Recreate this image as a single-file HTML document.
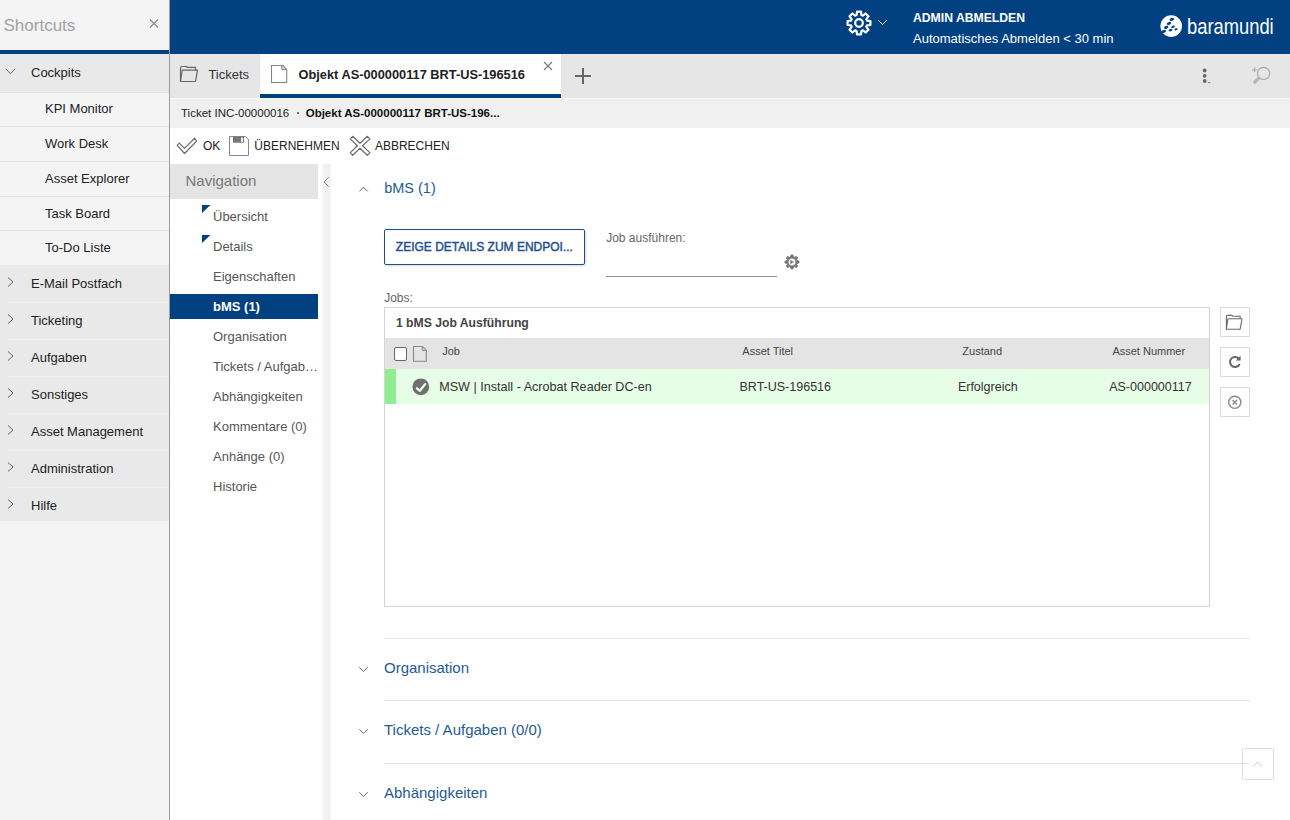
<!DOCTYPE html>
<html><head><meta charset="utf-8"><title>baramundi</title>
<style>
*{box-sizing:border-box;margin:0;padding:0}
html,body{width:1290px;height:820px;overflow:hidden;background:#fff;font-family:"Liberation Sans", sans-serif;position:relative}
svg{display:block}
</style></head><body>
<div style="position:absolute;left:0px;top:0px;width:169px;height:820px;background:#f4f4f4"></div>
<div style="position:absolute;left:169px;top:0px;width:1px;height:820px;background:#9c9c9c"></div>
<div style="position:absolute;left:3.5px;top:17px;font-size:17px;line-height:17px;font-weight:400;color:#a3a3a3;white-space:nowrap;">Shortcuts</div>
<svg style="position:absolute;left:149.4px;top:19px" width="10" height="9" viewBox="0 0 10 9"><path d="M1 0.5 L9 8.5 M9 0.5 L1 8.5" stroke="#8a8a8a" stroke-width="1.2"/></svg>
<div style="position:absolute;left:0px;top:50px;width:169px;height:4px;background:#014182"></div>
<div style="position:absolute;left:0px;top:54px;width:169px;height:38px;background:#e9e9e9"></div>
<svg style="position:absolute;left:5px;top:68px" width="12" height="8" viewBox="0 0 12 8"><path d="M0.8 0.8 L5.5 5.8 L10.2 0.8" fill="none" stroke="#777" stroke-width="1"/></svg>
<div style="position:absolute;left:31px;top:66px;font-size:13px;line-height:13px;font-weight:400;color:#222;white-space:nowrap;">Cockpits</div>
<div style="position:absolute;left:0px;top:92px;width:169px;height:1px;background:#e2e2e2"></div>
<div style="position:absolute;left:45px;top:102px;font-size:13px;line-height:13px;font-weight:400;color:#222;white-space:nowrap;">KPI Monitor</div>
<div style="position:absolute;left:0px;top:126px;width:169px;height:1px;background:#e2e2e2"></div>
<div style="position:absolute;left:45px;top:137px;font-size:13px;line-height:13px;font-weight:400;color:#222;white-space:nowrap;">Work Desk</div>
<div style="position:absolute;left:0px;top:161px;width:169px;height:1px;background:#e2e2e2"></div>
<div style="position:absolute;left:45px;top:172px;font-size:13px;line-height:13px;font-weight:400;color:#222;white-space:nowrap;">Asset Explorer</div>
<div style="position:absolute;left:0px;top:196px;width:169px;height:1px;background:#e2e2e2"></div>
<div style="position:absolute;left:45px;top:207px;font-size:13px;line-height:13px;font-weight:400;color:#222;white-space:nowrap;">Task Board</div>
<div style="position:absolute;left:0px;top:230px;width:169px;height:1px;background:#e2e2e2"></div>
<div style="position:absolute;left:45px;top:241px;font-size:13px;line-height:13px;font-weight:400;color:#222;white-space:nowrap;">To-Do Liste</div>
<div style="position:absolute;left:0px;top:265.1px;width:169px;height:256.4px;background:#e9e9e9"></div>
<div style="position:absolute;left:8px;top:302px;width:161px;height:1px;background:#eeeeee"></div>
<svg style="position:absolute;left:6px;top:275.9px" width="9" height="12" viewBox="0 0 9 12"><path d="M2 1.5 L7 6 L2 10.5" fill="none" stroke="#555" stroke-width="0.9"/></svg>
<div style="position:absolute;left:31px;top:277px;font-size:13px;line-height:13px;font-weight:400;color:#222;white-space:nowrap;">E-Mail Postfach</div>
<div style="position:absolute;left:8px;top:339px;width:161px;height:1px;background:#eeeeee"></div>
<svg style="position:absolute;left:6px;top:312.9px" width="9" height="12" viewBox="0 0 9 12"><path d="M2 1.5 L7 6 L2 10.5" fill="none" stroke="#555" stroke-width="0.9"/></svg>
<div style="position:absolute;left:31px;top:314px;font-size:13px;line-height:13px;font-weight:400;color:#222;white-space:nowrap;">Ticketing</div>
<div style="position:absolute;left:8px;top:376px;width:161px;height:1px;background:#eeeeee"></div>
<svg style="position:absolute;left:6px;top:349.9px" width="9" height="12" viewBox="0 0 9 12"><path d="M2 1.5 L7 6 L2 10.5" fill="none" stroke="#555" stroke-width="0.9"/></svg>
<div style="position:absolute;left:31px;top:351px;font-size:13px;line-height:13px;font-weight:400;color:#222;white-space:nowrap;">Aufgaben</div>
<div style="position:absolute;left:8px;top:413px;width:161px;height:1px;background:#eeeeee"></div>
<svg style="position:absolute;left:6px;top:386.9px" width="9" height="12" viewBox="0 0 9 12"><path d="M2 1.5 L7 6 L2 10.5" fill="none" stroke="#555" stroke-width="0.9"/></svg>
<div style="position:absolute;left:31px;top:388px;font-size:13px;line-height:13px;font-weight:400;color:#222;white-space:nowrap;">Sonstiges</div>
<div style="position:absolute;left:8px;top:450px;width:161px;height:1px;background:#eeeeee"></div>
<svg style="position:absolute;left:6px;top:423.9px" width="9" height="12" viewBox="0 0 9 12"><path d="M2 1.5 L7 6 L2 10.5" fill="none" stroke="#555" stroke-width="0.9"/></svg>
<div style="position:absolute;left:31px;top:425px;font-size:13px;line-height:13px;font-weight:400;color:#222;white-space:nowrap;">Asset Management</div>
<div style="position:absolute;left:8px;top:487px;width:161px;height:1px;background:#eeeeee"></div>
<svg style="position:absolute;left:6px;top:460.9px" width="9" height="12" viewBox="0 0 9 12"><path d="M2 1.5 L7 6 L2 10.5" fill="none" stroke="#555" stroke-width="0.9"/></svg>
<div style="position:absolute;left:31px;top:462px;font-size:13px;line-height:13px;font-weight:400;color:#222;white-space:nowrap;">Administration</div>
<svg style="position:absolute;left:6px;top:497.9px" width="9" height="12" viewBox="0 0 9 12"><path d="M2 1.5 L7 6 L2 10.5" fill="none" stroke="#555" stroke-width="0.9"/></svg>
<div style="position:absolute;left:31px;top:499px;font-size:13px;line-height:13px;font-weight:400;color:#222;white-space:nowrap;">Hilfe</div>
<div style="position:absolute;left:170px;top:0px;width:1120px;height:54px;background:#014182"></div>
<svg style="position:absolute;left:845.4px;top:9.3px" width="28" height="28" viewBox="-14 -14 28 28">
<path fill="none" stroke="#fff" stroke-width="2.2" stroke-linejoin="round" d="M-2.43,-7.94 L-2.01,-11.42 L2.01,-11.42 L2.43,-7.94 L3.90,-7.33 L6.65,-9.50 L9.50,-6.65 L7.33,-3.90 L7.94,-2.43 L11.42,-2.01 L11.42,2.01 L7.94,2.43 L7.33,3.90 L9.50,6.65 L6.65,9.50 L3.90,7.33 L2.43,7.94 L2.01,11.42 L-2.01,11.42 L-2.43,7.94 L-3.90,7.33 L-6.65,9.50 L-9.50,6.65 L-7.33,3.90 L-7.94,2.43 L-11.42,2.01 L-11.42,-2.01 L-7.94,-2.43 L-7.33,-3.90 L-9.50,-6.65 L-6.65,-9.50 L-3.90,-7.33 Z"/>
<circle cx="0" cy="0" r="3.8" fill="none" stroke="#fff" stroke-width="2.2"/></svg>
<svg style="position:absolute;left:877px;top:19px" width="11" height="7" viewBox="0 0 11 7"><path d="M1 1 L5.5 5.5 L10 1" fill="none" stroke="#dfe6ef" stroke-width="1"/></svg>
<div style="position:absolute;left:913px;top:12px;font-size:12.2px;line-height:12.2px;font-weight:700;color:#fff;white-space:nowrap;">ADMIN ABMELDEN</div>
<div style="position:absolute;left:913px;top:32px;font-size:13px;line-height:13px;font-weight:400;color:#fff;white-space:nowrap;">Automatisches Abmelden &lt; 30 min</div>
<svg style="position:absolute;left:1160px;top:14px" width="23" height="24" viewBox="0 0 23 24">
<circle cx="11.2" cy="12.1" r="10.8" fill="#fff"/>
<g fill="#014182">
<ellipse cx="11.8" cy="5.4" rx="2.3" ry="1.4" transform="rotate(-22 11.8 5.4)"/>
<ellipse cx="8.9" cy="9.5" rx="2.3" ry="1.4" transform="rotate(-22 8.9 9.5)"/>
<ellipse cx="6.2" cy="13.4" rx="2.3" ry="1.4" transform="rotate(-22 6.2 13.4)"/>
<ellipse cx="13" cy="12.8" rx="1.9" ry="1.1" transform="rotate(-15 13 12.8)"/>
<ellipse cx="3.8" cy="17.4" rx="2.3" ry="1.4" transform="rotate(-22 3.8 17.4)"/>
<ellipse cx="10.5" cy="16.1" rx="2.0" ry="1.2" transform="rotate(-15 10.5 16.1)"/>
<ellipse cx="16.1" cy="15.3" rx="1.7" ry="1.0" transform="rotate(-15 16.1 15.3)"/>
</g></svg>
<div style="position:absolute;left:1187px;top:16px;font-size:22px;line-height:22px;font-weight:400;color:#fff;white-space:nowrap;transform:scaleX(0.834);transform-origin:0 0">baramundi</div>
<div style="position:absolute;left:170px;top:54px;width:1120px;height:44px;background:#e6e6e6"></div>
<div style="position:absolute;left:260px;top:54px;width:301px;height:44px;background:#fff"></div>
<div style="position:absolute;left:260px;top:94px;width:301px;height:3.8px;background:#014182"></div>
<svg style="position:absolute;left:179px;top:65px" width="20" height="18" viewBox="0 0 20 18">
<path d="M1.5 16.5 L1.5 2.8 Q1.5 1.5 2.8 1.5 L7.4 1.5 L8.3 2.4 L16.5 2.4 L16.5 5.2" fill="none" stroke="#666" stroke-width="1.2"/>
<path d="M1.5 16.5 L3.2 5.2 L18.5 5.2 L16.5 16.5 Z" fill="none" stroke="#666" stroke-width="1.2" stroke-linejoin="round"/></svg>
<div style="position:absolute;left:208.4px;top:68px;font-size:13px;line-height:13px;font-weight:400;color:#333;white-space:nowrap;">Tickets</div>
<svg style="position:absolute;left:270px;top:64px" width="18" height="20" viewBox="0 0 18 20">
<path d="M1.5 1.5 H13 L16.7 5.6 V18.5 H1.5 Z" fill="#fff" stroke="#858585" stroke-width="1.1"/>
<path d="M11.8 1.5 V5.6 H16.7 L13 1.5 Z" fill="#d8d8d8" stroke="#858585" stroke-width="1" stroke-linejoin="round"/></svg>
<div style="position:absolute;left:298.5px;top:69px;font-size:12.8px;line-height:12.8px;font-weight:700;color:#222;white-space:nowrap;">Objekt AS-000000117 BRT-US-196516</div>
<svg style="position:absolute;left:543px;top:61px" width="10" height="10" viewBox="0 0 10 10"><path d="M1 1 L9 9 M9 1 L1 9" stroke="#777" stroke-width="1.1"/></svg>
<svg style="position:absolute;left:574px;top:67px" width="18" height="18" viewBox="0 0 18 18"><path d="M9 1 V17 M1 9 H17" stroke="#666" stroke-width="2"/></svg>
<svg style="position:absolute;left:1200px;top:66px" width="14" height="20" viewBox="0 0 14 20">
<circle cx="4.7" cy="4.5" r="1.9" fill="#666"/><circle cx="4.7" cy="9.8" r="1.9" fill="#666"/><circle cx="4.7" cy="15" r="1.9" fill="#666"/>
<path d="M7.5 16.2 H10.8 L9.2 17.4 Z" fill="#666"/></svg>
<svg style="position:absolute;left:1248px;top:62px" width="26" height="26" viewBox="0 0 26 26">
<circle cx="15.6" cy="11.4" r="6.1" fill="none" stroke="#ababab" stroke-width="1.2"/>
<path d="M11.3 15.6 L5.8 21.1" stroke="#b6b6b6" stroke-width="3.2"/>
<path d="M6.6 5.3 V10.3 M4.1 7.8 H9.1" stroke="#b3b3b3" stroke-width="1.3"/></svg>
<div style="position:absolute;left:170px;top:97.8px;width:1120px;height:30.2px;background:#f0f0f0;border-top:1px solid #f8f8f8"></div>
<div style="position:absolute;left:181px;top:108px;font-size:11.5px;line-height:11.5px;font-weight:400;color:#222;white-space:nowrap;">Ticket INC-00000016</div>
<div style="position:absolute;left:296.5px;top:111.5px;width:2.5px;height:2.5px;border-radius:50%;background:#444"></div>
<div style="position:absolute;left:305.7px;top:108px;font-size:11.5px;line-height:11.5px;font-weight:700;color:#111;white-space:nowrap;">Objekt AS-000000117 BRT-US-196...</div>
<svg style="position:absolute;left:176px;top:137px" width="22" height="18" viewBox="0 0 22 18">
<path d="M3.3 6.05 L8.5 11.35 L18.6 1.3 L20.7 4.0 L8.5 16.5 L1.2 8.3 Z" fill="#fff" stroke="#6c6c6c" stroke-width="1.2" stroke-linejoin="round"/></svg>
<div style="position:absolute;left:203px;top:140px;font-size:12px;line-height:12px;font-weight:400;color:#222;white-space:nowrap;">OK</div>
<svg style="position:absolute;left:228px;top:135px" width="22" height="22" viewBox="0 0 22 22">
<path d="M1.5 1.5 L17.5 1.5 L20.5 4.5 L20.5 20.5 L1.5 20.5 Z" fill="#fff" stroke="#888" stroke-width="1"/>
<rect x="5" y="1.5" width="11" height="6.2" fill="#777"/><rect x="13" y="2.7" width="2" height="4" fill="#fff"/></svg>
<div style="position:absolute;left:254.3px;top:140px;font-size:12px;line-height:12px;font-weight:400;color:#222;white-space:nowrap;">ÜBERNEHMEN</div>
<svg style="position:absolute;left:345px;top:131px" width="30" height="30" viewBox="0 0 30 30">
<path d="M5.30 7.90 L7.70 5.30 L15.00 12.30 L22.30 5.30 L24.90 7.90 L17.60 14.80 L24.90 21.60 L22.30 24.30 L15.00 17.20 L7.70 24.30 L5.30 21.60 L12.40 14.80 Z" fill="#fff" stroke="#6c6c6c" stroke-width="1.2" stroke-linejoin="round"/></svg>
<div style="position:absolute;left:374.9px;top:140px;font-size:12px;line-height:12px;font-weight:400;color:#222;white-space:nowrap;">ABBRECHEN</div>
<div style="position:absolute;left:170px;top:164px;width:148px;height:35px;background:#e4e4e4"></div>
<div style="position:absolute;left:185.5px;top:173px;font-size:15px;line-height:15px;font-weight:400;color:#777;white-space:nowrap;">Navigation</div>
<div style="position:absolute;left:322px;top:164px;width:9px;height:656px;background:linear-gradient(to right,#f8f8f8,#f1f1f1 40%,#f1f1f1 85%,#f6f6f6)"></div>
<svg style="position:absolute;left:322px;top:176px" width="9" height="12" viewBox="0 0 9 12"><path d="M6.8 1.2 L2 6 L6.8 10.8" fill="none" stroke="#888" stroke-width="1"/></svg>
<div style="position:absolute;left:213px;top:210px;font-size:13px;line-height:13px;font-weight:400;color:#555;white-space:nowrap;">Übersicht</div>
<svg style="position:absolute;left:202px;top:205px" width="9" height="8" viewBox="0 0 9 8"><path d="M0 0 H8.5 L0 8 Z" fill="#014182"/></svg>
<div style="position:absolute;left:213px;top:240px;font-size:13px;line-height:13px;font-weight:400;color:#555;white-space:nowrap;">Details</div>
<svg style="position:absolute;left:202px;top:235px" width="9" height="8" viewBox="0 0 9 8"><path d="M0 0 H8.5 L0 8 Z" fill="#014182"/></svg>
<div style="position:absolute;left:213px;top:270px;font-size:13px;line-height:13px;font-weight:400;color:#555;white-space:nowrap;">Eigenschaften</div>
<div style="position:absolute;left:170px;top:294px;width:148px;height:24.6px;background:#014182"></div>
<div style="position:absolute;left:213px;top:300px;font-size:13px;line-height:13px;font-weight:700;color:#fff;white-space:nowrap;">bMS (1)</div>
<div style="position:absolute;left:213px;top:330px;font-size:13px;line-height:13px;font-weight:400;color:#555;white-space:nowrap;">Organisation</div>
<div style="position:absolute;left:213px;top:360px;font-size:13px;line-height:13px;font-weight:400;color:#555;white-space:nowrap;">Tickets / Aufgab…</div>
<div style="position:absolute;left:213px;top:390px;font-size:13px;line-height:13px;font-weight:400;color:#555;white-space:nowrap;">Abhängigkeiten</div>
<div style="position:absolute;left:213px;top:420px;font-size:13px;line-height:13px;font-weight:400;color:#555;white-space:nowrap;">Kommentare (0)</div>
<div style="position:absolute;left:213px;top:450px;font-size:13px;line-height:13px;font-weight:400;color:#555;white-space:nowrap;">Anhänge (0)</div>
<div style="position:absolute;left:213px;top:480px;font-size:13px;line-height:13px;font-weight:400;color:#555;white-space:nowrap;">Historie</div>
<svg style="position:absolute;left:358px;top:185px" width="11" height="8" viewBox="0 0 11 8"><path d="M1.4 6.3 L5.5 2.2 L9.6 6.3" fill="none" stroke="#5a5a5a" stroke-width="1"/></svg>
<div style="position:absolute;left:384.2px;top:181px;font-size:14.5px;line-height:14.5px;font-weight:400;color:#1f5a97;white-space:nowrap;">bMS (1)</div>
<div style="position:absolute;left:384px;top:229.2px;width:201px;height:35.6px;border:1px solid #1d4e8a;border-radius:2px;background:#fff;box-shadow:1px 1px 2px rgba(0,0,0,0.15)"></div>
<div style="position:absolute;left:395.8px;top:241px;font-size:12px;line-height:12px;font-weight:400;color:#1d4e8a;white-space:nowrap;-webkit-text-stroke:0.4px #1d4e8a">ZEIGE DETAILS ZUM ENDPOI...</div>
<div style="position:absolute;left:606.2px;top:232px;font-size:12px;line-height:12px;font-weight:400;color:#666;white-space:nowrap;">Job ausführen:</div>
<div style="position:absolute;left:606px;top:276px;width:171px;height:1px;background:#929292"></div>
<svg style="position:absolute;left:782.9px;top:252.8px" width="18" height="18" viewBox="-9 -9 18 18">
<path fill="#777" stroke="#777" stroke-width="0.8" stroke-linejoin="round" fill-rule="evenodd" d="M-1.79,-4.67 L-0.87,-7.05 L0.87,-7.05 L1.79,-4.67 L2.03,-4.57 L4.37,-5.59 L5.59,-4.37 L4.57,-2.03 L4.67,-1.79 L7.05,-0.87 L7.05,0.87 L4.67,1.79 L4.57,2.03 L5.59,4.37 L4.37,5.59 L2.03,4.57 L1.79,4.67 L0.87,7.05 L-0.87,7.05 L-1.79,4.67 L-2.03,4.57 L-4.37,5.59 L-5.59,4.37 L-4.57,2.03 L-4.67,1.79 L-7.05,0.87 L-7.05,-0.87 L-4.67,-1.79 L-4.57,-2.03 L-5.59,-4.37 L-4.37,-5.59 L-2.03,-4.57 Z M0,-3.9 A3.9,3.9 0 1,0 0,3.9 A3.9,3.9 0 1,0 0,-3.9 Z"/>
<path d="M-1.4,-1.8 L1.6,0 L-1.4,1.8 Z" fill="#777" stroke="#777" stroke-width="0.5" stroke-linejoin="round"/></svg>
<div style="position:absolute;left:384.2px;top:292px;font-size:12px;line-height:12px;font-weight:400;color:#666;white-space:nowrap;">Jobs:</div>
<div style="position:absolute;left:384px;top:307px;width:826px;height:300px;border:1px solid #d4d4d4;background:#fff"></div>
<div style="position:absolute;left:395.9px;top:317px;font-size:12.2px;line-height:12.2px;font-weight:700;color:#444;white-space:nowrap;">1 bMS Job Ausführung</div>
<div style="position:absolute;left:385px;top:338.4px;width:824px;height:30.6px;background:#e4e4e4"></div>
<div style="position:absolute;left:394px;top:347.3px;width:13px;height:13.4px;border:1.1px solid #666;border-radius:2px;background:#fff"></div>
<svg style="position:absolute;left:412px;top:345px" width="16" height="18" viewBox="0 0 16 18">
<path d="M1.5 1.5 H10.6 L14.3 5.3 V16.3 H1.5 Z" fill="none" stroke="#8a8a8a" stroke-width="1.1"/>
<path d="M10.2 1.5 V5.5 H14.3 L10.6 1.5 Z" fill="#c8c8c8" stroke="#8a8a8a" stroke-width="0.9" stroke-linejoin="round"/></svg>
<div style="position:absolute;left:442.2px;top:346px;font-size:11px;line-height:11px;font-weight:400;color:#444;white-space:nowrap;">Job</div>
<div style="position:absolute;left:742.3px;top:346px;font-size:11px;line-height:11px;font-weight:400;color:#444;white-space:nowrap;">Asset Titel</div>
<div style="position:absolute;left:962.3px;top:346px;font-size:11px;line-height:11px;font-weight:400;color:#444;white-space:nowrap;">Zustand</div>
<div style="position:absolute;left:1112.4px;top:346px;font-size:11px;line-height:11px;font-weight:400;color:#444;white-space:nowrap;">Asset Nummer</div>
<div style="position:absolute;left:385px;top:369px;width:824px;height:34.6px;background:#e6fde6"></div>
<div style="position:absolute;left:385px;top:369px;width:10.5px;height:34.6px;background:#90ee90"></div>
<svg style="position:absolute;left:412px;top:378px" width="18" height="18" viewBox="0 0 18 18">
<circle cx="8.8" cy="8.8" r="8.4" fill="#707070"/><path d="M4.9 10.3 L7.9 12.8 L13.1 6.1" fill="none" stroke="#eefaee" stroke-width="2.3" stroke-linecap="round" stroke-linejoin="round"/></svg>
<div style="position:absolute;left:439.2px;top:381px;font-size:12.6px;line-height:12.6px;font-weight:400;color:#333;white-space:nowrap;">MSW | Install - Acrobat Reader DC-en</div>
<div style="position:absolute;left:739.5px;top:381px;font-size:12.5px;line-height:12.5px;font-weight:400;color:#333;white-space:nowrap;">BRT-US-196516</div>
<div style="position:absolute;left:957.9px;top:381px;font-size:12.5px;line-height:12.5px;font-weight:400;color:#333;white-space:nowrap;">Erfolgreich</div>
<div style="position:absolute;left:1109.2px;top:381px;font-size:12.5px;line-height:12.5px;font-weight:400;color:#333;white-space:nowrap;">AS-000000117</div>
<div style="position:absolute;left:1220.3px;top:307.4px;width:29.5px;height:29.5px;border:1px solid #dcdcdc;background:#fff"></div>
<div style="position:absolute;left:1220.3px;top:347.1px;width:29.5px;height:29.5px;border:1px solid #dcdcdc;background:#fff"></div>
<div style="position:absolute;left:1220.3px;top:387.3px;width:29.5px;height:29.5px;border:1px solid #dcdcdc;background:#fff"></div>
<svg style="position:absolute;left:1225.2px;top:313.6px" width="20" height="18" viewBox="0 0 20 18">
<g transform="scale(0.92)">
<path d="M1.5 16.5 L1.5 2.8 Q1.5 1.5 2.8 1.5 L7.4 1.5 L8.3 2.4 L16.5 2.4 L16.5 5.2" fill="none" stroke="#6a6a6a" stroke-width="1.2"/>
<path d="M1.5 16.5 L3.2 5.2 L18.5 5.2 L16.5 16.5 Z" fill="none" stroke="#6a6a6a" stroke-width="1.2" stroke-linejoin="round"/></g></svg>
<svg style="position:absolute;left:1227px;top:354px" width="16" height="16" viewBox="0 0 16 16">
<path d="M12.2 5.2 A5 5 0 1 0 12.6 10" fill="none" stroke="#666" stroke-width="2"/>
<path d="M13.6 1.8 L13.6 6.6 L8.8 6.6 Z" fill="#666"/></svg>
<svg style="position:absolute;left:1227px;top:394px" width="16" height="16" viewBox="0 0 16 16">
<circle cx="7.8" cy="8.3" r="6.1" fill="none" stroke="#8c8c8c" stroke-width="1.4"/>
<path d="M5.5 6 L10.1 10.6 M10.1 6 L5.5 10.6" stroke="#8c8c8c" stroke-width="1.4"/></svg>
<div style="position:absolute;left:384px;top:638px;width:866px;height:1px;background:#e6e6e6"></div>
<svg style="position:absolute;left:358px;top:665.8px" width="11" height="8" viewBox="0 0 11 8"><path d="M1.3 1.3 L5.5 5.5 L9.7 1.3" fill="none" stroke="#666" stroke-width="1"/></svg>
<div style="position:absolute;left:384px;top:660px;font-size:15px;line-height:15px;font-weight:400;color:#1f5a97;white-space:nowrap;">Organisation</div>
<div style="position:absolute;left:384px;top:700px;width:866px;height:1px;background:#e6e6e6"></div>
<svg style="position:absolute;left:358px;top:727.8px" width="11" height="8" viewBox="0 0 11 8"><path d="M1.3 1.3 L5.5 5.5 L9.7 1.3" fill="none" stroke="#666" stroke-width="1"/></svg>
<div style="position:absolute;left:384px;top:722px;font-size:15px;line-height:15px;font-weight:400;color:#1f5a97;white-space:nowrap;">Tickets / Aufgaben (0/0)</div>
<div style="position:absolute;left:384px;top:763px;width:866px;height:1px;background:#e6e6e6"></div>
<svg style="position:absolute;left:358px;top:790.8px" width="11" height="8" viewBox="0 0 11 8"><path d="M1.3 1.3 L5.5 5.5 L9.7 1.3" fill="none" stroke="#666" stroke-width="1"/></svg>
<div style="position:absolute;left:384px;top:785px;font-size:15px;line-height:15px;font-weight:400;color:#1f5a97;white-space:nowrap;">Abhängigkeiten</div>
<div style="position:absolute;left:1242.2px;top:748px;width:31.5px;height:31.5px;border:1px solid #dedede;border-radius:2px"></div>
<svg style="position:absolute;left:1252px;top:760px" width="11" height="8" viewBox="0 0 11 8"><path d="M1 6.5 L5.5 2 L10 6.5" fill="none" stroke="#c8c8c8" stroke-width="1"/></svg>
</body></html>
